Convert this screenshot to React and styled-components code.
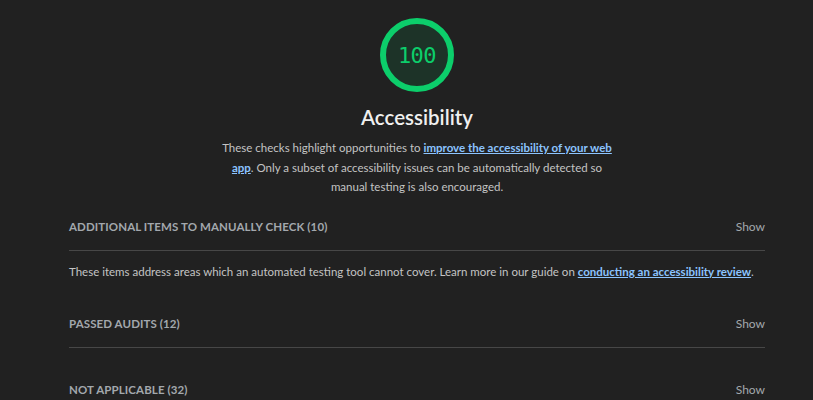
import React from 'react';
import styled, { createGlobalStyle } from 'styled-components';

const GlobalStyle = createGlobalStyle`
  html, body {
    margin: 0;
    background: #212121;
  }
  body {
    font-family: Lato, 'Liberation Sans', sans-serif;
    color: #c4c4c4;
  }
`;

const Page = styled.main`
  width: 696px;
  margin-left: 69px;
  padding-top: 18px;
`;

const CategoryHeader = styled.header`
  display: flex;
  flex-direction: column;
  align-items: center;
`;

const GaugeWrap = styled.div`
  width: 74px;
  height: 74px;
  position: relative;
  display: flex;
  align-items: center;
  justify-content: center;
`;

const GaugeScore = styled.span`
  position: absolute;
  font-family: 'DejaVu Sans Mono', 'Liberation Mono', monospace;
  font-size: 22px;
  color: #0cce6b;
  letter-spacing: -0.5px;
`;

const Title = styled.h1`
  margin: 12px 0 0;
  font-size: 20.5px;
  line-height: 26px;
  font-weight: 600;
  color: #f0f0f0;
`;

const Description = styled.p`
  margin: 8px 0 0;
  width: 400px;
  text-align: center;
  font-size: 11.5px;
  line-height: 19.5px;
  color: #c4c4c4;
`;

const Link = styled.a`
  color: #8cc4ff;
  font-weight: 700;
  text-decoration: underline;
`;

const Group = styled.section`
  margin-top: ${p => p.$first ? '7px' : '19px'};
`;

const GroupHeader = styled.div`
  height: 46px;
  display: flex;
  align-items: center;
  justify-content: space-between;
  border-bottom: ${p => p.$open ? '1px solid #474747' : 'none'};
`;

const GroupTitle = styled.span`
  font-size: 11.5px;
  font-weight: 700;
  text-transform: uppercase;
  letter-spacing: 0.1px;
  color: #a3a8ad;
`;

const Toggle = styled.span`
  font-size: 12px;
  color: #a3a8ad;
`;

const GroupDescription = styled.p`
  margin: 11px 0 0;
  font-size: 11.5px;
  line-height: 20px;
  color: #c4c4c4;
`;

const Gauge = ({ score }) => (
  <GaugeWrap>
    <svg width="74" height="74" viewBox="0 0 74 74">
      <circle cx="37" cy="37" r="34" fill="#1d3328" stroke="#0cce6b" strokeWidth="6" />
    </svg>
    <GaugeScore>{score}</GaugeScore>
  </GaugeWrap>
);

export default function App() {
  return (
    <>
      <GlobalStyle />
      <Page>
        <CategoryHeader>
          <Gauge score={100} />
          <Title>Accessibility</Title>
          <Description>
            These checks highlight opportunities to{' '}
            <Link href="#">improve the accessibility of your web app</Link>. Only a subset of
            accessibility issues can be automatically detected so manual testing is also encouraged.
          </Description>
        </CategoryHeader>

        <Group $first>
          <GroupHeader $open>
            <GroupTitle>Additional items to manually check (10)</GroupTitle>
            <Toggle>Show</Toggle>
          </GroupHeader>
          <GroupDescription>
            These items address areas which an automated testing tool cannot cover. Learn more in our guide on{' '}
            <Link href="#">conducting an accessibility review</Link>.
          </GroupDescription>
        </Group>

        <Group>
          <GroupHeader $open>
            <GroupTitle>Passed audits (12)</GroupTitle>
            <Toggle>Show</Toggle>
          </GroupHeader>
        </Group>

        <Group>
          <GroupHeader>
            <GroupTitle>Not applicable (32)</GroupTitle>
            <Toggle>Show</Toggle>
          </GroupHeader>
        </Group>
      </Page>
    </>
  );
}
